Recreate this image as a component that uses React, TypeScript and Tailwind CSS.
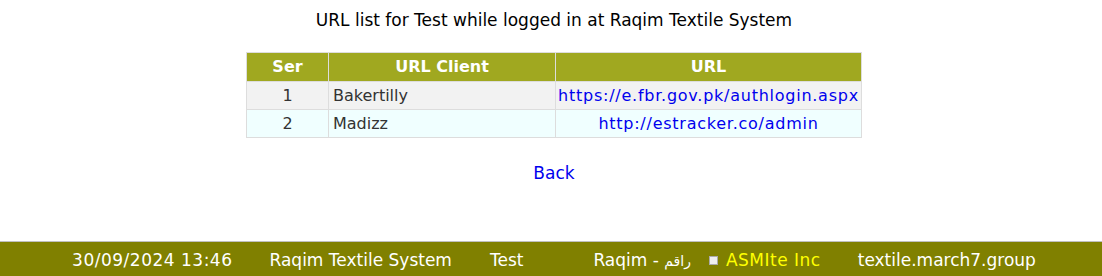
import React from 'react';

const rows = [
    { ser: 1, client: 'Bakertilly', url: 'https://e.fbr.gov.pk/authlogin.aspx', bg: 'bg-[#f2f2f2]' },
    { ser: 2, client: 'Madizz', url: 'http://estracker.co/admin', bg: 'bg-[#f0ffff]' },
];

export default function App() {
    return (
        <div className="min-h-screen flex flex-col bg-white font-['DejaVu_Sans',sans-serif] text-[16px] text-[#222]">
            <div className="flex flex-col items-center pt-[9px] pl-[6px] h-[241px]">
                <h2 className="text-[17px] leading-[22px] text-black">URL list for Test while logged in at Raqim Textile System</h2>
                <table className="mt-[21px] w-[616px] border-collapse border border-[#dddddd]">
                    <thead>
                        <tr className="bg-[#a0a820] text-white font-bold h-[29px]">
                            <th className="w-[82px] border border-[#dddddd]">Ser</th>
                            <th className="w-[227px] border border-[#dddddd]">URL Client</th>
                            <th className="border border-[#dddddd]">URL</th>
                        </tr>
                    </thead>
                    <tbody>
                        {rows.map((r) => (
                            <tr key={r.ser} className={`${r.bg} h-[28px] text-[#333]`}>
                                <td className="text-center border border-[#dddddd]">{r.ser}</td>
                                <td className="px-[4px] border border-[#dddddd]">{r.client}</td>
                                <td className="text-center border border-[#dddddd]">
                                    <a href="#" className="text-[#0000ee] tracking-[0.75px]">{r.url}</a>
                                </td>
                            </tr>
                        ))}
                    </tbody>
                </table>
                <a href="#" className="mt-[23px] text-[17px] text-[#0000ee]">Back</a>
            </div>
            <div className="h-[35px] bg-[#808000] border-t border-[#c0c0c0] flex items-center justify-center pl-[6px] pt-[3px] text-[17px] text-white">
                <span className="tracking-[0.5px]">30/09/2024 13:46</span>
                <span className="ml-[37px]">Raqim Textile System</span>
                <span className="ml-[38px]">Test</span>
                <span className="ml-[70px]">Raqim - <span className="text-[14px]">راقم</span></span>
                <span className="ml-[18px] w-[9px] h-[9px] bg-[#eeeeee] border border-[#aaaaaa]" />
                <span className="ml-[8px] text-[#ffff00] tracking-[0.5px]">ASMIte Inc</span>
                <span className="ml-[37px]">textile.march7.group</span>
            </div>
        </div>
    );
}
